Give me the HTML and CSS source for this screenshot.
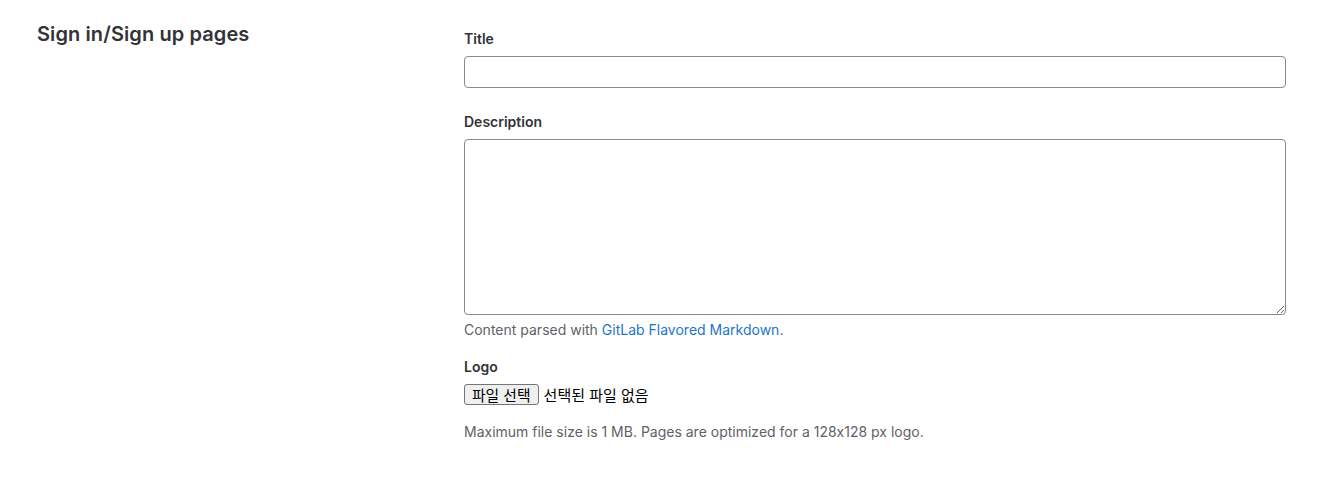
FILE: index.html
```html
<!DOCTYPE html>
<html lang="ko">
<head>
<meta charset="utf-8">
<title>Sign in/Sign up pages</title>
<link rel="stylesheet" href="styles.css">
</head>
<body>
<section class="settings">
  <div class="settings-left">
    <h4 class="settings-title">Sign in/Sign up pages</h4>
  </div>
  <div class="settings-right">
    <div class="form-group">
      <label class="label">Title</label>
      <input class="form-control" type="text">
    </div>
    <div class="form-group">
      <label class="label">Description</label>
      <textarea class="form-control textarea"></textarea>
      <p class="help help-md">Content parsed with <a class="link" href="#">GitLab Flavored Markdown</a>.</p>
    </div>
    <div class="form-group logo-group">
      <label class="label">Logo</label>
      <div class="file-input">
        <button class="file-btn" type="button">파일 선택</button><span class="file-name">선택된 파일 없음</span>
      </div>
      <p class="help help-file">Maximum file size is 1 MB. Pages are optimized for a 128x128 px logo.</p>
    </div>
  </div>
</section>
</body>
</html>
```

FILE: styles.css
```css
* { box-sizing: border-box; }
html, body { margin: 0; padding: 0; background: #fff; }
body {
  font-family: Inter, "Noto Sans", "Noto Sans CJK KR", sans-serif;
  font-size: 14px;
  line-height: 20px;
  color: #333238;
  font-feature-settings: "calt" 0;
}
.settings {
  display: grid;
  grid-template-columns: 427px 822px;
  padding: 22px 0 0 37px;
}
.settings-title {
  margin: 0;
  font-size: 20px;
  line-height: 24px;
  font-weight: 600;
  letter-spacing: 0.1px;
  color: #333238;
}
.settings-right { padding-top: 7px; }
.form-group { display: flex; flex-direction: column; margin-bottom: 24px; }
.label {
  font-weight: 600;
  font-size: 14px;
  line-height: 20px;
  margin-bottom: 7px;
  color: #333238;
}
.form-control {
  width: 822px;
  height: 32px;
  border: 1px solid #89888d;
  border-radius: 4px;
  padding: 6px 12px;
  font-family: inherit;
  font-size: 14px;
  background: #fff;
  color: #333238;
  margin: 0;
}
.textarea { height: 176px; display: block; resize: vertical; }
.help { margin: 0; color: #626168; font-size: 14px; line-height: 20px; }
.help-md { margin-top: 5px; }
.link { color: #1f75cb; text-decoration: none; }
.logo-group { margin-top: -7px; }
.file-input {
  display: flex;
  align-items: center;
  height: 21px;
  font-family: "Noto Sans CJK KR", "Noto Sans", sans-serif;
  font-size: 15px;
  color: #000;
  margin-top: 0;
}
.file-btn {
  font-family: "Noto Sans CJK KR", "Noto Sans", sans-serif;
  font-size: 14.8px;
  line-height: 17px;
  height: 21px;
  padding: 0 7px;
  margin: 0 5px 0 0;
  background: #efefef;
  border: 1px solid #767676;
  border-radius: 3px;
  color: #000;
}
.help-file { margin-top: 17px; }
```
